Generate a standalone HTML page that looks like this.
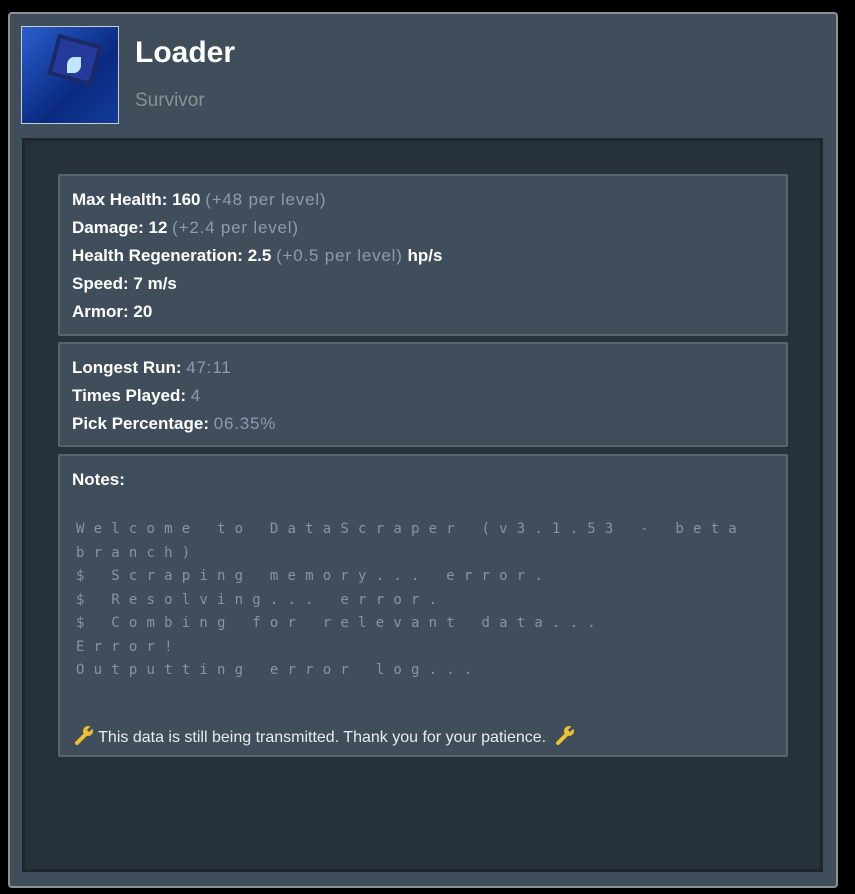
<!DOCTYPE html>
<html><head><style>
body{margin:0;width:855px;height:894px;background:#000;position:relative;overflow:hidden;font-family:"Liberation Sans",sans-serif;}
.panel{position:absolute;left:8px;top:12px;width:826px;height:872px;background:#3f4e5a;border:2px solid #8d9296;border-radius:4px;}
.dark{position:absolute;left:22px;top:138px;width:795px;height:728px;background:#27313a;border:3px solid #1e252c;}
.box{position:absolute;left:58px;width:726px;background:#3f4e5a;border:2px solid #56666f;border-radius:2px;}
.t{position:absolute;left:12px;color:#fff;font-size:17px;font-weight:bold;line-height:28px;}
.m{color:#8f98b0;font-weight:normal;letter-spacing:0.8px;}
.mono{position:absolute;left:16px;top:62px;width:690px;color:#8a93a4;font-size:14px;letter-spacing:9.2px;line-height:23.5px;font-family:"DejaVu Sans Mono",monospace;}
.icon{position:absolute;left:22px;top:27px;width:96px;height:96px;background:linear-gradient(135deg,#2a5fd0,#0a2a80 60%,#123c9a);}
</style></head><body>
<div class="panel"></div>
<div class="icon"><div style="position:absolute;left:30px;top:12px;width:38px;height:34px;border:4px solid #1b2a66;background:#253a9a;transform:rotate(15deg)"></div><div style="position:absolute;left:45px;top:30px;width:14px;height:16px;background:#bfe8ff;border-radius:50% 0 50% 0"></div><div style="position:absolute;left:-1px;top:-1px;width:96px;height:96px;border:1px solid #ccc;"></div></div>
<div style="position:absolute;left:135px;top:36px;color:#fff;font-size:30px;font-weight:bold;">Loader</div>
<div style="position:absolute;left:135px;top:90px;color:#8e9193;font-size:19px;">Survivor</div>
<div class="dark"></div>
<div class="box" style="top:174px;height:158px;"><div class="t" style="top:10px">Max Health: 160 <span class="m">(+48 per level)</span><br>Damage: 12 <span class="m">(+2.4 per level)</span><br>Health Regeneration: 2.5 <span class="m">(+0.5 per level)</span> hp/s<br>Speed: 7 m/s<br>Armor: 20</div></div>
<div class="box" style="top:342px;height:101px;"><div class="t" style="top:10px">Longest Run: <span class="m">47:11</span><br>Times Played: <span class="m">4</span><br>Pick Percentage: <span class="m">06.35%</span></div></div>
<div class="box" style="top:454px;height:299px;"><div class="t" style="top:10px">Notes:</div>
<div class="mono">Welcome to DataScraper (v3.1.53 - beta branch)<br>$ Scraping memory... error.<br>$ Resolving... error.<br>$ Combing for relevant data...<br>Error!<br>Outputting error log...</div>
<div style="position:absolute;left:14px;top:269px;color:#e8ecf0;font-size:16px;white-space:nowrap"><svg width="20" height="20" viewBox="0 0 20 20" style="vertical-align:-3px"><path d="M3 18 L11 10" stroke="#f0c030" stroke-width="4" stroke-linecap="round"/><circle cx="14" cy="6" r="5" fill="#f0c030"/><path d="M14 6 L19 1" stroke="#3f4e5a" stroke-width="3"/></svg> This data is still being transmitted. Thank you for your patience. &nbsp;<svg width="20" height="20" viewBox="0 0 20 20" style="vertical-align:-3px"><path d="M3 18 L11 10" stroke="#f0c030" stroke-width="4" stroke-linecap="round"/><circle cx="14" cy="6" r="5" fill="#f0c030"/><path d="M14 6 L19 1" stroke="#3f4e5a" stroke-width="3"/></svg></div></div>
</body></html>
